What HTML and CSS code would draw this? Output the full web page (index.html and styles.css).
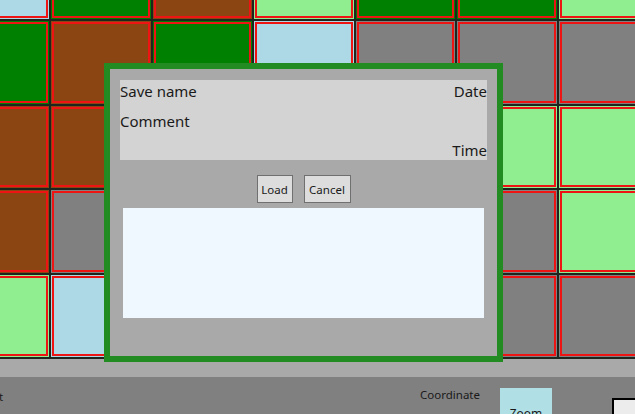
FILE: index.html
```html
<!DOCTYPE html>
<html>
<head>
<meta charset="utf-8">
<link rel="stylesheet" href="styles.css">
</head>
<body>
<div class="app">
  <div class="board">
    <div class="grid">
      <div class="cell lb"><div class="in"></div></div>
      <div class="cell gr"><div class="in"></div></div>
      <div class="cell br"><div class="in"></div></div>
      <div class="cell lg"><div class="in"></div></div>
      <div class="cell gr"><div class="in"></div></div>
      <div class="cell gr"><div class="in"></div></div>
      <div class="cell lg"><div class="in"></div></div>

      <div class="cell gr"><div class="in"></div></div>
      <div class="cell br"><div class="in"></div></div>
      <div class="cell gr"><div class="in"></div></div>
      <div class="cell lb"><div class="in"></div></div>
      <div class="cell gy"><div class="in"></div></div>
      <div class="cell gy"><div class="in"></div></div>
      <div class="cell gy"><div class="in"></div></div>

      <div class="cell br"><div class="in"></div></div>
      <div class="cell br"><div class="in"></div></div>
      <div class="cell gy"><div class="in"></div></div>
      <div class="cell gy"><div class="in"></div></div>
      <div class="cell gy"><div class="in"></div></div>
      <div class="cell lg"><div class="in"></div></div>
      <div class="cell lg"><div class="in"></div></div>

      <div class="cell br"><div class="in"></div></div>
      <div class="cell gy"><div class="in"></div></div>
      <div class="cell gy"><div class="in"></div></div>
      <div class="cell gy"><div class="in"></div></div>
      <div class="cell gy"><div class="in"></div></div>
      <div class="cell gy"><div class="in"></div></div>
      <div class="cell lg"><div class="in"></div></div>

      <div class="cell lg"><div class="in"></div></div>
      <div class="cell lb"><div class="in"></div></div>
      <div class="cell gy"><div class="in"></div></div>
      <div class="cell gy"><div class="in"></div></div>
      <div class="cell gy"><div class="in"></div></div>
      <div class="cell gy"><div class="in"></div></div>
      <div class="cell gy"><div class="in"></div></div>
    </div>
  </div>

  <div class="statusbar">
    <span class="cut">t</span>
    <span class="coord">Coordinate</span>
    <div class="zoom">Zoom</div>
    <div class="box"></div>
  </div>

  <div class="dialog">
    <div class="info">
      <div class="row">
        <span>Save name</span>
        <span>Date</span>
      </div>
      <div class="comment">Comment</div>
      <div class="time">Time</div>
    </div>
    <div class="actions">
      <button class="btn load">Load</button>
      <button class="btn cancel">Cancel</button>
    </div>
    <div class="list"></div>
  </div>
</div>
</body>
</html>
```

FILE: styles.css
```css
html, body {
  margin: 0;
  padding: 0;
}
body {
  width: 635px;
  height: 414px;
  overflow: hidden;
  font-family: "Noto Sans", "Open Sans", sans-serif;
  color: #1a1a1a;
}
.app {
  position: relative;
  width: 635px;
  height: 414px;
  overflow: hidden;
  display: flex;
  flex-direction: column;
}
.board {
  height: 377px;
  flex-shrink: 0;
  background: #a9a9a9;
  overflow: hidden;
}
.grid {
  display: grid;
  grid-template-columns: repeat(7, 99.6px);
  grid-auto-rows: 82.5px;
  gap: 2px;
  padding: 0 2px 2px 0;
  width: max-content;
  margin-top: -63.5px;
  margin-left: -50.6px;
  background: #1e241e;
}
.cell {
  padding: 1px;
}
.cell .in {
  height: 100%;
  box-sizing: border-box;
  border: 2px solid #ee1414;
}
.lb { background: #add8e6; }
.gr { background: #008000; }
.br { background: #8b4513; }
.lg { background: #90ee90; }
.gy { background: #808080; }

.statusbar {
  flex: 1;
  background: #808080;
  display: flex;
  align-items: flex-start;
  font-size: 11.5px;
  color: #1a1a1a;
}
.cut {
  flex: 1;
  margin-top: 12px;
  margin-left: -1px;
}
.coord {
  margin-top: 10px;
  margin-right: 20px;
}
.zoom {
  width: 52px;
  height: 50px;
  margin-top: 11px;
  margin-right: 60px;
  flex-shrink: 0;
  background: #b0e0e6;
  display: flex;
  align-items: center;
  justify-content: center;
  font-size: 12px;
}
.box {
  width: 23px;
  height: 30px;
  margin-top: 21px;
  flex-shrink: 0;
  box-sizing: border-box;
  border: 2px solid #000;
  border-right: none;
  background: #ececec;
}

.dialog {
  position: absolute;
  left: 104px;
  top: 63px;
  width: 399px;
  height: 299px;
  box-sizing: border-box;
  border: 6px solid #228b22;
  background: #a9a9a9;
  padding: 11px 10px 0;
  display: flex;
  flex-direction: column;
}
.info {
  height: 80px;
  background: #d3d3d3;
  box-sizing: border-box;
  padding-top: 1px;
  display: flex;
  flex-direction: column;
  font-size: 15px;
  line-height: 20px;
}
.row {
  display: flex;
  justify-content: space-between;
}
.comment {
  margin-top: 10px;
}
.time {
  margin-top: auto;
  align-self: flex-end;
}
.actions {
  margin-top: 15px;
  display: flex;
  justify-content: center;
  gap: 11px;
}
.btn {
  height: 28px;
  box-sizing: border-box;
  border: 1px solid #707070;
  background: #dddddd;
  font-family: "Noto Sans", "Open Sans", sans-serif;
  font-size: 11.5px;
  color: #1a1a1a;
  padding: 0;
  border-radius: 0;
}
.load { width: 36px; }
.cancel { width: 47px; }
.list {
  margin: 5px 3px 0;
  height: 110px;
  background: #f0f8ff;
}
```
